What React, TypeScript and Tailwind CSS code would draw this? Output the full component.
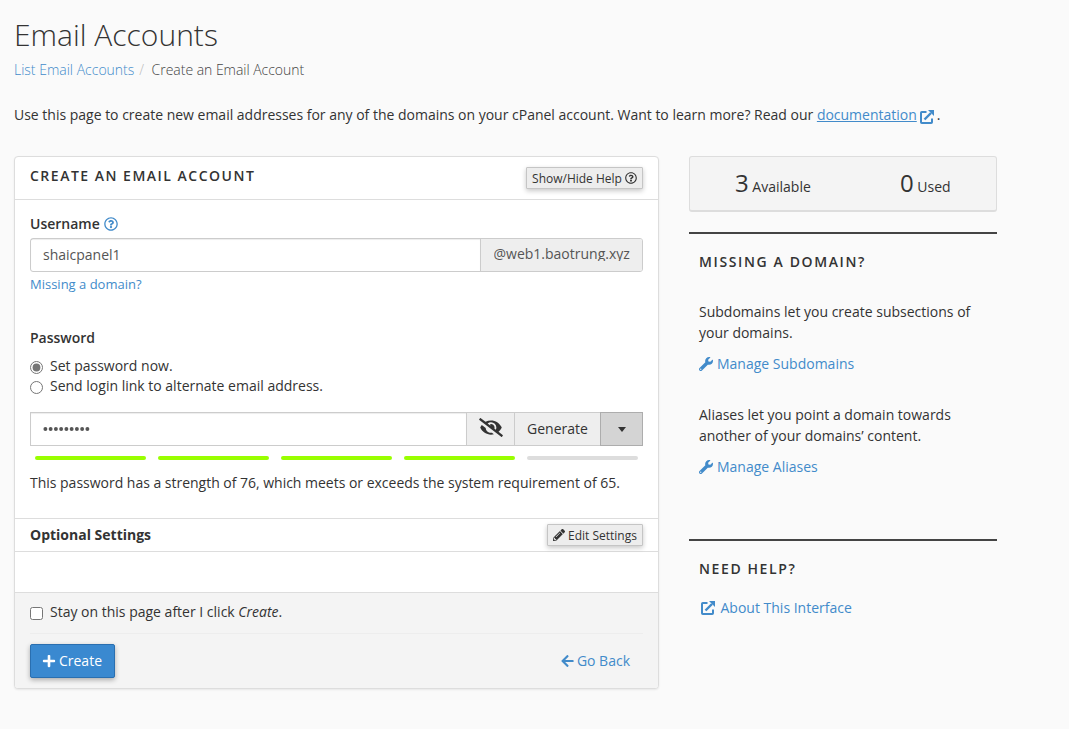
import { FaRegQuestionCircle, FaEyeSlash, FaPencilAlt, FaPlus, FaArrowLeft, FaWrench } from "react-icons/fa";

function ExternalIcon({ className = "" }: { className?: string }) {
  return (
    <svg viewBox="0 0 14 14" className={`h-[14px] w-[14px] shrink-0 ${className}`} fill="none" stroke="currentColor" strokeWidth="2">
      <path d="M6.5 2H1.8Q1 2 1 2.8V12.2Q1 13 1.8 13H11.2Q12 13 12 12.2V8.5" />
      <path d="M4.5 9.5L11 3" strokeWidth="2.4" />
      <path d="M8 0H14V6Z" fill="currentColor" stroke="none" />
    </svg>
  );
}

function PasswordDots() {
  return (
    <svg viewBox="0 0 48 6" className="h-[6px] w-[48px]" fill="#555">
      {[0, 1, 2, 3, 4, 5, 6, 7, 8].map((i) => (
        <circle key={i} cx={2.4 + i * 5.25} cy={3} r={1.95} />
      ))}
    </svg>
  );
}

function Strength({ value }: { value: number }) {
  return (
    <div className="mt-[10px] flex gap-3 px-[5px]">
      {[0, 1, 2, 3, 4].map((i) => (
        <div key={i} className={i < value ? "h-1 flex-1 rounded-full bg-[#99ff00]" : "h-1 flex-1 rounded-full bg-[#dddddd]"} />
      ))}
    </div>
  );
}

function ManageLink({ label }: { label: string }) {
  return (
    <a className="mt-[10px] flex h-[21px] items-center text-[#428bca]">
      <FaWrench className="mr-1 h-[14px] w-[14px]" />
      {label}
    </a>
  );
}

export default function App() {
  return (
    <div className="h-[729px] w-[1069px] overflow-hidden bg-[#fafafa] pl-[14px] font-['Open_Sans',sans-serif] text-[14px] leading-[21px] text-[#333]">
      <h1 className="pt-[16px] text-[30px] leading-[38px] font-light">Email Accounts</h1>
      <nav className="mt-[6px] flex h-[20px] items-center leading-[20px] font-light">
        <a className="text-[#428bca]">List Email Accounts</a>
        <span className="px-[5px] text-[#bbb]">/</span>
        <span className="ml-[2.5px] tracking-[-0.03px] text-[#444]">Create an Email Account</span>
      </nav>
      <p className="mt-[24px] flex h-[21px] items-center tracking-[-0.008px] whitespace-pre">
        Use this page to create new email addresses for any of the domains on your cPanel account. Want to learn more? Read our{" "}
        <a className="text-[#428bca] underline">documentation</a>
        <ExternalIcon className="mt-[4px] mr-[3px] ml-[3px] text-[#428bca]" />.
      </p>

      <div className="mt-[31px] flex items-start gap-[30px]">
        <section className="flex h-[533px] w-[645px] flex-col rounded-[4px] border border-[#ddd] bg-white shadow-[0_1px_2px_rgba(0,0,0,0.08)]">
          <header className="flex h-[43px] shrink-0 items-start justify-between border-b border-[#ddd] px-[15px]">
            <h2 className="mt-[9px] leading-[20px] font-semibold tracking-[1.5px]">CREATE AN EMAIL ACCOUNT</h2>
            <button className="mt-[10px] flex h-[22px] w-[117px] items-center justify-center gap-[3px] rounded-[1px] border border-[#c5c5c5] bg-[#ededed] text-[12px] whitespace-nowrap shadow-[0_2px_5px_rgba(0,0,0,0.22)]">
              Show/Hide Help <FaRegQuestionCircle />
            </button>
          </header>

          <div className="h-[318px] shrink-0 px-[15px] pt-[13px]">
            <label className="flex h-[20px] items-center gap-1 font-semibold">
              Username <FaRegQuestionCircle className="mt-px text-[#428bca]" />
            </label>
            <div className="mt-[5px] flex h-[34px] rounded-[3px] border border-[#ccc]">
              <div className="flex-1 pt-[6px] pl-[12px] leading-[20px] text-[#555] shadow-[inset_0_1px_1px_rgba(0,0,0,0.075)]">shaicpanel1</div>
              <div className="w-[162px] rounded-r-[2px] border-l border-[#ccc] bg-[#eee] pt-[6px] pl-[12.5px] text-[#555]">
                <div className="h-[16px] overflow-hidden leading-[18px]">@web1.baotrung.xyz</div>
              </div>
            </div>
            <a className="mt-[2px] block h-[20px] text-[13px] leading-[20px] text-[#428bca]">Missing a domain?</a>
            <div className="mt-[34px] h-[20px] leading-[20px] font-semibold">Password</div>
            <label className="mt-[8px] flex h-[20px] leading-[20px]">
              <input type="radio" name="pw" defaultChecked className="mt-[5px] mr-[7px] h-[13px] w-[13px] accent-[#767676]" />
              Set password now.
            </label>
            <label className="flex h-[20px] leading-[20px]">
              <input type="radio" name="pw" className="mt-[5px] mr-[7px] h-[13px] w-[13px]" />
              Send login link to alternate email address.
            </label>
            <div className="mt-[16px] flex h-[34px] border border-[#ccc]">
              <div className="flex flex-1 items-center pb-px pl-[12px] shadow-[inset_0_1px_1px_rgba(0,0,0,0.075)]">
                <PasswordDots />
              </div>
              <div className="flex w-[48px] items-center justify-center border-l border-[#ccc] bg-[#eee]">
                <FaEyeSlash className="mb-[3px] h-[19px] w-[24px]" />
              </div>
              <div className="flex w-[86px] items-center justify-center border-l border-[#ccc] bg-[#eee] pb-[2px]">Generate</div>
              <div className="-my-px -mr-px flex w-[43px] items-center justify-center border border-[#adadad] bg-[#d4d4d4]">
                <span className="border-x-[4.5px] border-t-[5px] border-x-transparent border-t-[#333]" />
              </div>
            </div>
            <Strength value={4} />
            <p className="mt-[12px] tracking-[-0.015px]">This password has a strength of 76, which meets or exceeds the system requirement of 65.</p>
          </div>

          <div className="flex h-[34px] shrink-0 items-center justify-between border-y border-[#ddd] px-[15px]">
            <strong className="-mt-px font-bold">Optional Settings</strong>
            <button className="flex h-[22px] w-[96px] items-center justify-center gap-[3px] rounded-[1px] border border-[#c5c5c5] bg-[#ededed] text-[12px] whitespace-nowrap shadow-[0_2px_5px_rgba(0,0,0,0.22)]">
              <FaPencilAlt /> Edit Settings
            </button>
          </div>
          <div className="h-[40px] shrink-0" />

          <footer className="flex-1 rounded-b-[3px] border-t border-[#ddd] bg-[#f4f4f4] px-[15px] pt-[9px]">
            <label className="flex h-[20px] leading-[20px] whitespace-pre">
              <input type="checkbox" className="mt-[5px] mr-[7px] h-[13px] w-[13px]" />
              Stay on this page after I click <em>Create</em>.
            </label>
            <div className="mt-[11px] flex justify-between border-t border-[#ededed] pt-[10px]">
              <button className="flex h-[34px] w-[85px] items-center justify-center gap-[3px] rounded-[2px] border border-[#2a6fb0] bg-[#3a89d0] pr-px pb-[2px] text-white shadow-[0_2px_5px_rgba(0,0,0,0.3)]">
                <FaPlus className="mt-px" /> Create
              </button>
              <a className="mr-[13px] flex h-[34px] items-center gap-[3px] pb-[2px] text-[#428bca]">
                <FaArrowLeft className="mt-px h-[14px] w-[13px]" /> Go Back
              </a>
            </div>
          </footer>
        </section>

        <aside className="w-[308px]">
          <div className="flex h-[56px] rounded-[3px] border border-b-2 border-[#ddd] bg-[#f4f4f4]">
            <div className="flex-1 pt-[10px] pl-[45px] leading-[32px]"><span className="text-[24px]">3</span> Available</div>
            <div className="w-[96px] pt-[10px] leading-[32px]"><span className="text-[24px]">0</span> Used</div>
          </div>
          <div className="mt-[20px] h-[307px] border-t-2 border-[#444] px-[10px] pt-[18px]">
            <h3 className="h-[20px] leading-[20px] font-semibold tracking-[1.62px]">MISSING A DOMAIN?</h3>
            <p className="mt-[29px]">Subdomains let you create subsections of<br />your domains.</p>
            <ManageLink label="Manage Subdomains" />
            <p className="mt-[30px]">Aliases let you point a domain towards<br />another of your domains’ content.</p>
            <ManageLink label="Manage Aliases" />
          </div>
          <div className="border-t-2 border-[#444] px-[10px] pt-[18px]">
            <h3 className="h-[20px] leading-[20px] font-semibold tracking-[1.6px]">NEED HELP?</h3>
            <a className="mt-[18px] flex h-[21px] items-center gap-[5.5px] pl-[2px] text-[#428bca]">
              <ExternalIcon /> About This Interface
            </a>
          </div>
        </aside>
      </div>
    </div>
  );
}
